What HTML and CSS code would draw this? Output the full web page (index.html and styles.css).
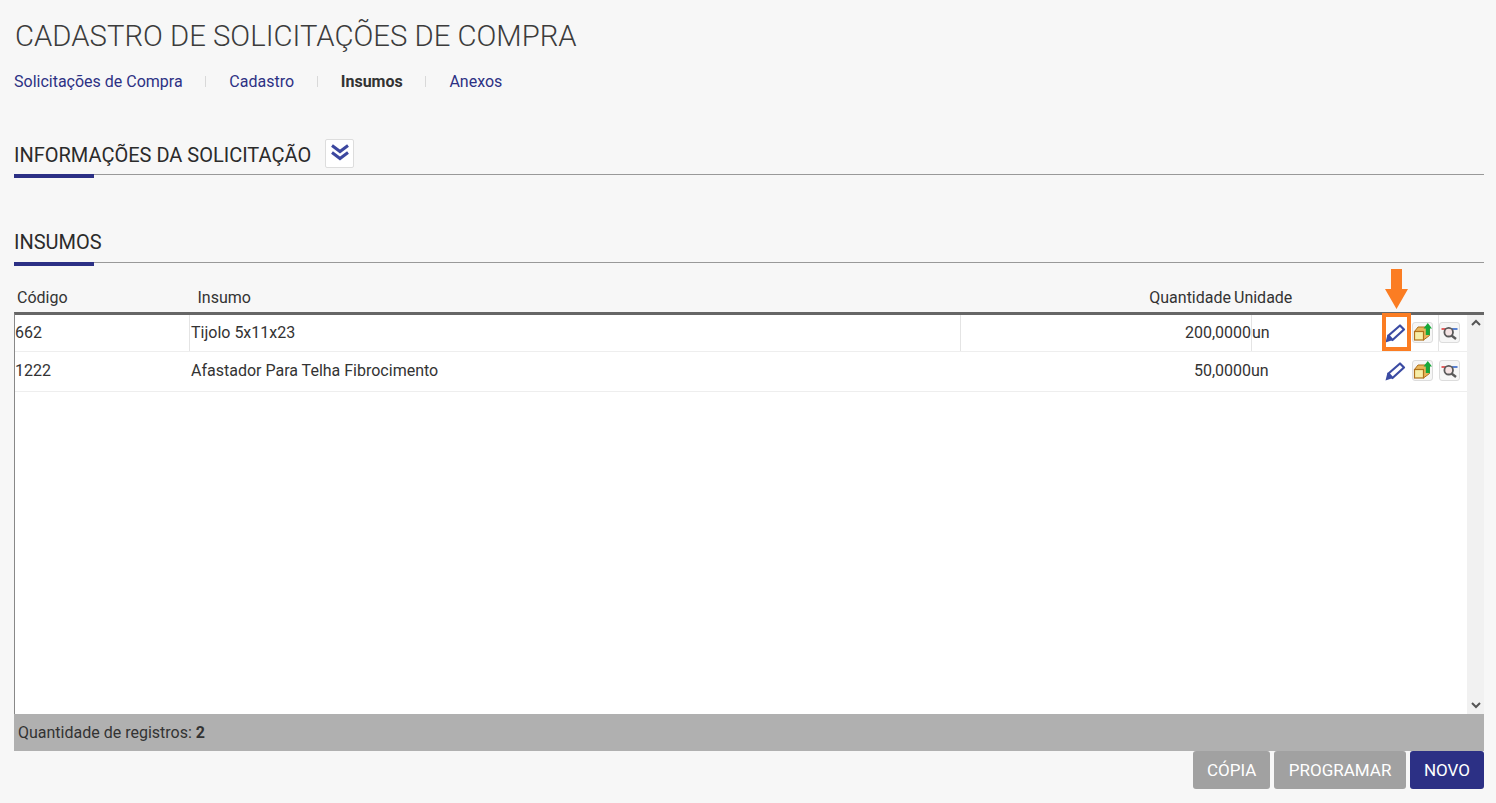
FILE: index.html
```html
<!DOCTYPE html>
<html lang="pt">
<head>
<meta charset="utf-8">
<title>Cadastro de Solicitações de Compra</title>
<link rel="stylesheet" href="styles.css">
</head>
<body>
<svg class="defs" width="0" height="0" aria-hidden="true">
  <symbol id="pen" viewBox="0 0 22 22">
    <path d="M16 3.500l4 4L8.500 18 4.500 13.500z" fill="#fff" stroke="#3b4ba3" stroke-width="2.200" stroke-linejoin="round"/>
    <path d="M3.500 12.500l5.500 5.500L1.500 20.500z" fill="#3b4ba3"/>
  </symbol>
  <symbol id="cube" viewBox="0 0 19 19">
    <path d="M1.500 8.500l3.500-4.500h11.500v8.500l-6 4.500V8.500z" fill="#e9b65a" stroke="#b0701a" stroke-width="1"/>
    <rect x="1.500" y="8.500" width="9" height="8.500" fill="#f7eda6" stroke="#b0701a" stroke-width="1.200"/>
    <path d="M14.800 0L19 5.500h-2.200V12h-4V5.500H10.500z" fill="#16a83a"/>
  </symbol>
  <symbol id="lens" viewBox="0 0 19 19">
    <path d="M1.500 6h5" stroke="#e23b3b" stroke-width="1.600"/>
    <path d="M12 6h5.500" stroke="#3264c8" stroke-width="1.600"/>
    <circle cx="8.700" cy="9.200" r="4.300" fill="#f5e4e4" stroke="#5a5a5a" stroke-width="1.800"/>
    <path d="M11.500 12.500l4.500 3.500" stroke="#5a5a5a" stroke-width="2.400"/>
  </symbol>
</svg>
<main class="page">
  <h1 class="title">CADASTRO DE SOLICITAÇÕES DE COMPRA</h1>
  <nav class="tabs">
    <a class="tab">Solicitações de Compra</a>
    <a class="tab">Cadastro</a>
    <a class="tab active">Insumos</a>
    <a class="tab">Anexos</a>
  </nav>

  <section class="section first">
    <h2 class="section-title"><span class="section-text">INFORMAÇÕES DA SOLICITAÇÃO</span>
      <span class="toggle">
        <svg width="22" height="20" viewBox="0 0 22 20"><path d="M3 2.500L11 8.500l8-6M3 9.500L11 15.500l8-6" fill="none" stroke="#3c479f" stroke-width="3"/></svg>
      </span>
    </h2>
  </section>

  <section class="section second">
    <h2 class="section-title">INSUMOS</h2>
  </section>

  <div class="grid-wrap">
    <div class="grid-head">
      <div class="h-code">Código</div>
      <div class="h-name">Insumo</div>
      <div class="h-qty">Quantidade</div>
      <div class="h-unit">Unidade</div>
    </div>
    <div class="grid-body">
      <div class="rows">
        <div class="row row-a">
          <div class="c-code">662</div>
          <div class="c-name">Tijolo 5x11x23</div>
          <div class="c-qty">200,0000</div>
          <div class="c-unit">un</div>
          <div class="c-act">
            <svg class="i-pen" width="22" height="22"><use href="#pen"/></svg>
            <span class="i-btn"><svg width="19" height="19"><use href="#cube"/></svg></span>
            <span class="i-btn"><svg width="19" height="19"><use href="#lens"/></svg></span>
          </div>
        </div>
        <div class="row row-b">
          <div class="c-code">1222</div>
          <div class="c-name">Afastador Para Telha Fibrocimento</div>
          <div class="c-qty">50,0000</div>
          <div class="c-unit">un</div>
          <div class="c-act">
            <svg class="i-pen" width="22" height="22"><use href="#pen"/></svg>
            <span class="i-btn"><svg width="19" height="19"><use href="#cube"/></svg></span>
            <span class="i-btn"><svg width="19" height="19"><use href="#lens"/></svg></span>
          </div>
        </div>
      </div>
      <div class="scrollbar">
        <svg width="16" height="16" viewBox="0 0 16 16"><path d="M4 10l4-4 4 4" fill="none" stroke="#555" stroke-width="2"/></svg>
        <svg width="16" height="16" viewBox="0 0 16 16"><path d="M4 6l4 4 4-4" fill="none" stroke="#555" stroke-width="2"/></svg>
      </div>
    </div>
    <div class="grid-foot">Quantidade de registros: <b>2</b></div>
    <div class="actions">
      <button class="btn">CÓPIA</button>
      <button class="btn wide">PROGRAMAR</button>
      <button class="btn primary">NOVO</button>
    </div>
    <svg class="arrow" width="23" height="40" viewBox="0 0 23 40"><path d="M6 0h11v20h6L11.500 40 0 20h6z" fill="#fb7d23"/></svg>
    <div class="mark"></div>
  </div>
</main>
</body>
</html>
```
FILE: styles.css
```css
* { box-sizing: border-box; }
html, body { margin: 0; height: 100%; }
body {
  background: #f7f7f7;
  font-family: Roboto, "Liberation Sans", sans-serif;
  color: #333;
  overflow: hidden;
}
.defs { position: absolute; }
.page { padding: 0 12px 0 14px; }
.title {
  margin: 0;
  padding: 18px 0 0 1px;
  height: 69px;
  font-size: 29.3px;
  line-height: 36px;
  font-weight: 300;
  color: #3c3c3c;
  white-space: nowrap;
}
.tabs { display: flex; height: 24px; align-items: center; font-size: 16px; }
.tab { color: #2d3184; padding-right: 23.500px; margin-right: 23.200px; position: relative; }
.tab:not(:last-child)::after {
  content: ""; position: absolute; right: 0; top: 4px; height: 11px; width: 1px; background: #d9d9d9;
}
.tab.active { color: #333; font-weight: 700; }
.section { border-bottom: 1px solid #999; position: relative; }
.section::after {
  content: ""; position: absolute; left: 0; bottom: -4px; width: 80px; height: 4px; background: #2c3085;
}
.section.first { margin-top: 45px; height: 37px; }
.section.second { margin-top: 54px; height: 34px; }
.section-title {
  margin: 0;
  font-size: 20px; line-height: 26px; font-weight: 400; color: #2b2b2b;
  display: flex; align-items: center; gap: 14px;
}
.section-text { padding-top: 4px; }
.toggle {
  width: 29px; height: 29px; background: #fff; border: 1px solid #ddd;
  border-radius: 2px; display: flex; align-items: center; justify-content: center;
}
.grid-wrap { position: relative; margin-top: 21px; }
.grid-head { display: flex; height: 28px; font-size: 16px; line-height: 28px; color: #333; }
.h-code { width: 176px; padding-left: 3px; }
.h-name { width: 950px; padding-left: 7.500px; }
.h-qty { width: 91px; text-align: right; white-space: nowrap; }
.h-unit { padding-left: 3px; }
.grid-body {
  display: flex; height: 402px; background: #fff;
  border-top: 3px solid #666; border-left: 1px solid #888;
}
.rows { flex: 1; min-width: 0; }
.scrollbar {
  width: 17px; background: #f1f1f1; display: flex; flex-direction: column; align-items: center; justify-content: space-between; padding-bottom: 1px;
}
.row { display: flex; align-items: center; font-size: 16px; border-bottom: 1px solid #eee; color: #333; }
.row-a { height: 37px; }
.row-b { height: 40px; padding-bottom: 2px; }
.row-a > div { align-self: stretch; display: flex; align-items: center; padding-bottom: 1px; }
.row > div { white-space: nowrap; }
.c-code { width: 175px; }
.c-name { width: 770px; padding-left: 1px; }
.c-qty { width: 291px; text-align: right; }
.c-unit { width: 130px; }
.row-a .c-code { width: 174px; }
.row-a .c-name { width: 771px; border-left: 1px solid #e4e4e4; padding-left: 1px; }
.row-a .c-qty { border-left: 1px solid #e4e4e4; justify-content: flex-end; }
.row-a .c-unit { border-left: 1px solid #e4e4e4; }
.c-act { flex: 1; display: flex; align-items: center; padding-left: 3px; position: relative; }
.row-a .c-act::after {
  content: ""; position: absolute; left: 57px; top: 0; bottom: 0; width: 1px; background: #e4e4e4;
}
.i-pen { margin-right: 6px; }
.i-btn {
  width: 21px; height: 21px; background: #f6f6f6; border: 1px solid #dcdcdc; border-radius: 3px;
  display: inline-flex; align-items: center; justify-content: center;
}
.i-btn + .i-btn { margin-left: 6px; }
.grid-foot {
  height: 37px; background: #b0b0b0; font-size: 16px; line-height: 37px; padding-left: 4px; color: #333;
}
.grid-foot b { font-weight: 700; }
.actions { display: flex; justify-content: flex-end; gap: 4px; }
.btn {
  height: 38px; border: 0; border-radius: 3px; background: #a1a1a1; color: #fff;
  font: 400 17px Roboto, sans-serif; padding: 0 14px;
}
.btn.wide { padding: 0 14.500px; }
.btn.primary { background: #2c3085; }
.arrow { position: absolute; left: 1371px; top: -15px; }
.mark {
  position: absolute; left: 1368px; top: 29px; width: 29px; height: 38px; border: 4px solid #fb7d23;
}
```
